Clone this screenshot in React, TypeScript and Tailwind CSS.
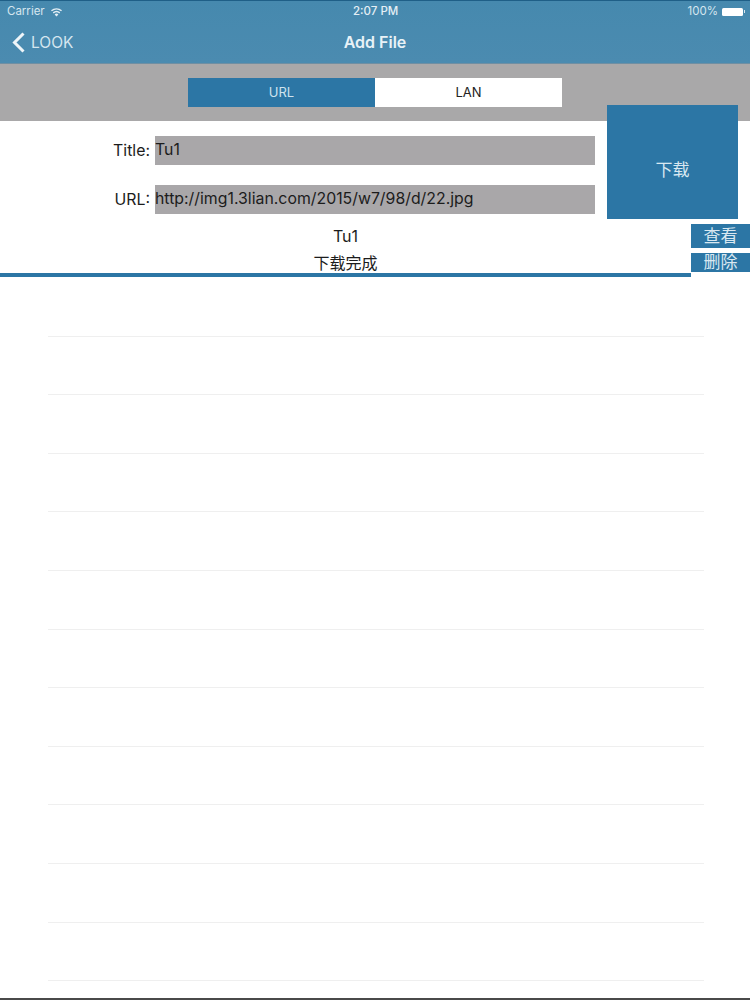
const font = "font-['Inter','Noto_Sans_CJK_SC',sans-serif]";
const rows = Array.from({ length: 12 }, (_, i) => i);

function StatusBar() {
  return (
    <div className="relative flex h-[21px] items-center justify-between pl-[7px] pr-[5px] text-[11.5px] text-[#d5e6ef]">
      <div className="flex items-center gap-[5px]">
        <span>Carrier</span>
        <svg width="13" height="10" viewBox="0 0 13 10" fill="#e4eff5">
          <path d="M6.5 9.6 4.6 7.4a2.9 2.9 0 0 1 3.8 0z" />
          <path d="M3.7 6.4 2.8 5.3a5.8 5.8 0 0 1 7.4 0L9.3 6.4a4.3 4.3 0 0 0-5.6 0z" />
          <path d="M1.9 4.3 1 3.2a8.6 8.6 0 0 1 11 0l-.9 1.1a7.2 7.2 0 0 0-9.2 0z" />
        </svg>
      </div>
      <span className="absolute left-[353px] font-medium text-[#e4eff5]">2:07 PM</span>
      <div className="flex items-center gap-[4px]">
        <span>100%</span>
        <div className="h-[8px] w-[21px] rounded-[1.5px] bg-white" />
        <div className="-ml-[3px] h-[3px] w-[1px] bg-white/80" />
      </div>
    </div>
  );
}

function NavBar() {
  return (
    <div className="relative flex h-[42px] items-center pb-[2px]">
      <svg className="ml-[12px]" width="13" height="21" viewBox="0 0 13 21" fill="none" stroke="#eef5f9" strokeWidth="3">
        <path d="M11.5 1.5 2.5 10.5l9 9" />
      </svg>
      <span className="ml-[6px] mt-[1px] text-[15.5px] text-[#d5e6ef]">LOOK</span>
      <span className="absolute inset-x-0 text-center text-[16px] font-semibold text-[#e8f2f7]">Add File</span>
    </div>
  );
}

export default function App() {
  return (
    <div className={`flex h-[1000px] w-[750px] flex-col overflow-hidden bg-white ${font}`}>
      {/* header */}
      <div className="h-[64px] shrink-0 border-t border-t-[#1f5f87] border-b border-b-[#6f8fa3] bg-gradient-to-b from-[#4689ae] to-[#4b8bb0]">
        <StatusBar />
        <NavBar />
      </div>

      {/* segmented control */}
      <div className="flex h-[57px] shrink-0 items-center justify-center bg-[#a9a8a9]">
        <div className="flex h-[29px] w-[374px] text-[13px]">
          <div className="flex flex-1 items-center justify-center bg-[#2c76a5] text-[#cfe3ee]">URL</div>
          <div className="flex flex-1 items-center justify-center bg-white text-[#222222]">LAN</div>
        </div>
      </div>

      {/* form */}
      <div className="flex shrink-0">
        <div className="flex w-[595px] flex-col gap-[20px] pt-[15px] text-[15.85px] text-[#1c1c1c]">
          <div className="flex h-[29px] items-center">
            <span className="w-[150px] text-right">Title:</span>
            <div className="ml-[5px] flex h-full flex-1 items-center bg-[#a9a7a9] pb-[1px]">Tu1</div>
          </div>
          <div className="flex h-[29px] items-center">
            <span className="w-[150px] text-right">URL:</span>
            <div className="ml-[5px] flex h-full flex-1 items-center bg-[#a9a7a9] pb-[1px]">http://img1.3lian.com/2015/w7/98/d/22.jpg</div>
          </div>
        </div>
        <button className="relative -mt-[16px] ml-[12px] flex h-[114px] w-[131px] items-center justify-center bg-[#2c76a5] pt-[18px] text-[17px] text-[#d9e8f1]">
          下载
        </button>
      </div>

      {/* download item */}
      <div className="mt-[5px] flex h-[53px] shrink-0">
        <div className="flex flex-1 flex-col">
          <div className="flex min-h-0 flex-1 flex-col items-center text-[16px] text-[#1c1c1c]">
            <span className="h-[26px] leading-[25px]">Tu1</span>
            <span className="h-[23px] leading-[27px]">下载完成</span>
          </div>
          <div className="h-[4px] shrink-0 bg-[#2c76a5]" />
        </div>
        <div className="flex w-[59px] flex-col text-[17px] text-[#d9e8f1]">
          <button className="flex h-[24px] items-center justify-center bg-[#2c76a5] pt-[1px]">查看</button>
          <button className="mt-[5px] flex h-[19px] items-center justify-center bg-[#2c76a5]">删除</button>
        </div>
      </div>

      {/* empty table rows */}
      <div className="flex flex-1 flex-col pt-[1px]">
        {rows.map((i) => (
          <div key={i} className="ml-[48px] h-[58.6px] w-[656px] shrink-0 border-b border-b-[#efefef]" />
        ))}
      </div>

      <div className="h-[2px] shrink-0 bg-[#4a4a4a]" />
    </div>
  );
}
